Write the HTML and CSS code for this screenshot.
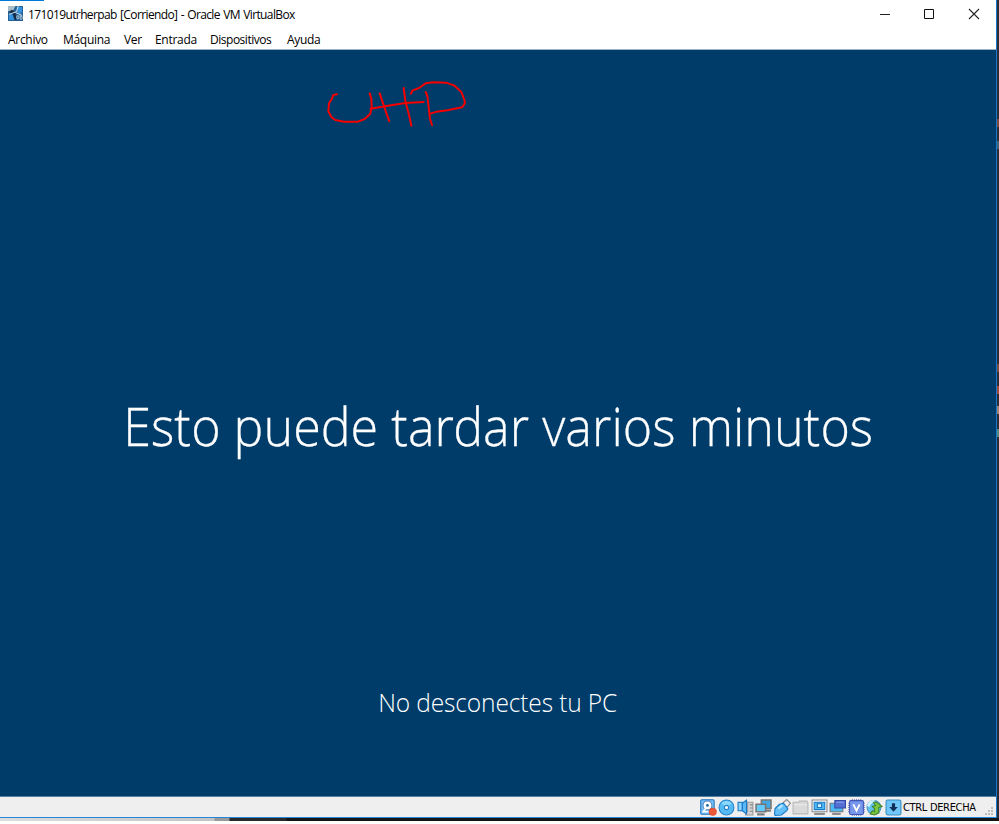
FILE: index.html
```
<!DOCTYPE html>
<html lang="es">
<head>
<meta charset="utf-8">
<title>171019utrherpab [Corriendo] - Oracle VM VirtualBox</title>
<link rel="stylesheet" href="styles.css">
</head>
<body>
<div class="desktop">
  <main class="window">
    <header class="titlebar">
      <svg class="app-icon" viewBox="0 0 16 16"><path fill="#285f91" d="M0 0h16v16H0z"/><path fill="#a9bdc9" d="M0 0h8l-2 4-4 2-2-1z"/><path fill="#3292df" d="M9 1h6v6l-5 1zM1 9l5-1 1 7H1z"/><path fill="#142d48" d="m4 4 4 3 1 8H7L5 9 1 6z"/><path d="m11 0-2 6-8 3M8 7l7 3" stroke="#d5e8f5" fill="none"/><path d="M9.500 10.500h2v3h-2zM13 8v6h2v-3h-2" stroke="#a9c5da" fill="none"/></svg>
      <h1 class="title">171019utrherpab [Corriendo] - Oracle VM VirtualBox</h1>
      <svg class="controls" viewBox="0 0 119 28" fill="none"><path d="M0 14.500h10" stroke="#222"/><path d="M44.500 9.500h9v9h-9z" stroke="#111"/><path d="m89 9 10 10m0-10L89 19" stroke="#222" stroke-width="1.100"/></svg>
    </header>
    <nav class="menu"><a>Archivo</a><a>Máquina</a><a>Ver</a><a>Entrada</a><a class="tight">Dispositivos</a><a>Ayuda</a></nav>
    <section class="screen">
      <svg class="scribble" viewBox="0 0 510 195"><path d="M81 73l-11 2-4 11-9 14-2 24 9 17 12 9 26 5 42 0 20-8 17-16 4-20-1-25-5-16M182 116l42-7 63-10 54-3M209 70l9 27 15 43 5 14M281 54l5 38 12 47 6 28M303 71l4-9 20-8 20-14 23-3 38 1 24 8 22 20 9 23 2 10-9 13-44 9-32 4-19 6M347 66l5 12 5 42 3 27 6 18"/></svg>
      <p class="headline">Esto puede tardar varios minutos</p>
      <p class="notice">No desconectes tu PC</p>
    </section>
    <footer class="status">
      <div class="icons">
        <svg viewBox="0 0 16 16"><rect x=".7" y=".7" width="12.600" height="13.600" rx="1" fill="#76c2fb" stroke="#2275bd"/><circle cx="7" cy="6" r="4.200" fill="#fff" stroke="#5688bd"/><circle cx="7" cy="6" r="1.300" fill="#246a9e"/><path d="m6 8-3 4h5" stroke="#fff" stroke-width="1.500" fill="none"/><circle cx="12" cy="12" r="3.500" fill="#ed5937" stroke="#d8422b" stroke-width=".6"/></svg>
        <svg viewBox="0 0 16 16"><circle cx="8" cy="8" r="7" fill="#56bbf5" stroke="#2683c9"/><path d="M3 4a7 7 0 0 1 10 0L8 8z" fill="#8bd8ff"/><circle cx="8" cy="8" r="2" fill="#fff" stroke="#2683c9"/></svg>
        <svg viewBox="0 0 16 16"><path d="M10 3h5v12H8v-3h2z" fill="#d3d3d3" stroke="#999"/><path d="M12 5.500h3m-3 3h3m-3 3h3" stroke="#888"/><path d="M1 3h4v8H1z" fill="#8bd6ff" stroke="#1976c4"/><path d="m5 4 4-3v13l-4-3z" fill="#5abaf5" stroke="#1976c4"/></svg>
        <svg viewBox="0 0 16 16"><path d="M6 1h9v8H6z" fill="#43a9e5" stroke="#777" stroke-width="1.500"/><path d="M9 11h6" stroke="#777" stroke-width="2"/><path d="M1 5h9v7H1z" fill="#65c9fa" stroke="#777" stroke-width="1.500"/><path d="M2 14.500h7" stroke="#777" stroke-width="2"/></svg>
        <svg viewBox="0 0 16 16"><path d="m8 4 4-3.500 3.500 3.500L12 8z" fill="#eee" stroke="#888"/><path d="m5 5 4-1 4 5-1 2-5 4-6 .5L.500 14 1 9z" fill="#62c0f7" stroke="#1976c4"/><path d="m4 9 4-3" stroke="#b5e6ff" stroke-width="2"/></svg>
        <svg viewBox="0 0 16 16"><path d="M1 3h5l1-1h7l1 2v10H1z" fill="#d9d9d9" stroke="#b8b8b8"/><path d="M2 5.500h12" stroke="#eee"/></svg>
        <svg viewBox="0 0 16 16"><path d="M1 1h14v11H1z" fill="#fff" stroke="#888"/><path d="M3 3h10v7H3z" fill="#50baf3" stroke="#1976c4"/><path d="M6 4.500h4v3.500H6z" fill="#d7f4ff" stroke="#1976c4"/><path d="M3 14h10" stroke="#888" stroke-width="2"/></svg>
        <svg viewBox="0 0 16 16"><path d="M1 4h12v8H1z" fill="#4bb8f2" stroke="#777"/><path d="M3 14h8" stroke="#888" stroke-width="2"/><path d="M5.500 1.500h10v7h-10z" fill="#5370d2" stroke="#3449a8"/><path d="M7 3h7" stroke="#8ea5f1"/></svg>
        <svg viewBox="0 0 16 16"><path d="M4 0v16M6 0v16M8 0v16M10 0v16M12 0v16M0 4h16M0 6h16M0 8h16M0 10h16M0 12h16" stroke="#5365b8" stroke-width=".7"/><rect x="1.500" y="1.500" width="13" height="13" rx="1" fill="#7797ed" stroke="#4157b4"/><path d="m5 5 3 6 3-6" fill="none" stroke="#fff" stroke-width="1.700"/></svg>
        <svg viewBox="0 0 16 16"><circle cx="7.500" cy="8" r="6.500" fill="#61c1ef" stroke="#4992c5"/><path d="M2 7q2-5 6-5" stroke="#d2f3ff" stroke-width="2.500" fill="none"/><path d="M7 3h3l5 4-3 1v5l-4 2-4-1 2-3 2 1V9L6 7l3-1z" fill="#79c73c" stroke="#43862b"/></svg>
        <svg viewBox="0 0 16 16"><rect x="1" y="1" width="14" height="14" rx="1.500" fill="#71c6f8" stroke="#378cc1"/><path d="M6.500 4h3v3.500H12L8 12 4 7.500h2.500z" fill="#102f58"/></svg>
      </div>
      <span class="key">CTRL DERECHA</span>
      <svg class="grip" viewBox="0 0 9 9"><path fill="#bdbdbd" d="M6 0h2v2H6zM3 3h2v2H3zm3 0h2v2H6zM0 6h2v2H0zm3 0h2v2H3zm3 0h2v2H6z"/></svg>
    </footer>
  </main>
  <aside class="edge"><i class="e1"></i><i class="e2"></i><i class="e3"></i><i class="e4"></i><i class="e5"></i><i class="e6"></i></aside>
</div>
<div class="taskbar"></div>
</body>
</html>
```
FILE: styles.css
```
* { box-sizing: border-box; }
body { margin: 0; width: 999px; height: 824px; overflow: hidden; background: #fff; font-family: "Open Sans", "Noto Sans", sans-serif; color: #000; }
h1, p { margin: 0; font-weight: inherit; }
svg { display: block; flex: none; }
.desktop { display: flex; height: 818px; }
.window { width: 997px; border-right: 1px solid #1679cf; border-bottom: 1px solid #2486d8; }
.titlebar { height: 29px; display: flex; align-items: flex-start; padding: 0 16px 0 8px; background: linear-gradient(#0078d7, #0078d7) 0 0 / 44px 1px no-repeat #fff; }
.app-icon { width: 15px; height: 15px; margin-top: 6px; }
.title { margin-left: 5px; flex: 1; font-size: 12px; line-height: 29px; white-space: nowrap; letter-spacing: -.62px; word-spacing: .8px; }
.controls { width: 119px; height: 28px; margin-right: -19px; }
.menu { height: 21px; display: grid; grid-template-columns: 55px 61px 31px 55px 77px 60px; padding-left: 8px; font-size: 12px; line-height: 21px; border-bottom: 1px solid #9fb3c5; letter-spacing: -.3px; }
.tight { letter-spacing: -.48px; }
.screen { height: 746px; background: #003c69; color: #fff; display: flex; flex-direction: column; align-items: center; font-family: "Open Sans Light", "Open Sans", sans-serif; font-weight: 300; white-space: nowrap; }
.scribble { width: 170px; height: 65px; margin: 20px 0 0 310px; align-self: flex-start; fill: none; stroke: #f50000; stroke-width: 6; stroke-linecap: round; stroke-linejoin: round; }
.headline { margin-top: 250px; height: 80px; line-height: 80px; font-size: 54px; transform: scaleX(.93); -webkit-text-stroke: .3px #fff; }
.notice { margin-top: 217px; height: 40px; line-height: 40px; font-size: 25px; letter-spacing: -.15px; transform: scaleX(.982); }
.status { height: 21px; display: flex; align-items: center; padding-left: 699.500px; background: #efefef; border-top: 1px solid #527f9f; }
.icons { display: flex; gap: 1.500px; }
.icons svg { width: 17px; height: 17px; }
.key { margin-left: 1.500px; width: 82px; font: 11px "DejaVu Sans Condensed", "DejaVu Sans", sans-serif; white-space: nowrap; letter-spacing: -.32px; }
.grip { width: 9px; height: 9px; margin-top: 8px; }
.edge { width: 2px; background: #302d30; display: flex; flex-direction: column; }
.edge i { height: 8px; flex: none; background: #7b4b3f; }
.edge .e1 { margin-top: 119px; }
.edge .e2 { margin-top: 14px; background: #466170; }
.edge .e3 { margin-top: 215px; }
.edge .e4 { margin-top: 14px; background: #a34935; }
.edge .e5 { margin-top: 12px; background: #a18072; }
.edge .e6 { margin-top: 15px; background: #538b79; }
.taskbar { height: 3px; background: linear-gradient(90deg, #ddd 0, #c4c4c4 214px, #999 215px, #999 229px, #292929 230px, #292929 286px, #151515 287px); }
```
